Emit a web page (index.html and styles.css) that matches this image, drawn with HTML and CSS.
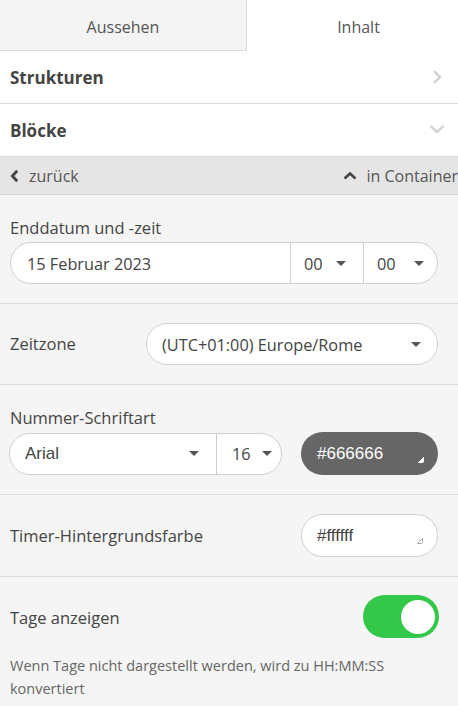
FILE: index.html
```html
<!DOCTYPE html>
<html lang="de">
<head>
<meta charset="utf-8">
<link rel="stylesheet" href="styles.css">
</head>
<body>
<div class="panel">
  <div class="tabs">
    <div class="tab tab-off">Aussehen</div>
    <div class="tab tab-on">Inhalt</div>
  </div>
  <div class="acc-row">
    <span>Strukturen</span>
    <svg class="acc-icon" width="10" height="16" viewBox="0 0 10 16"><path d="M2 2l6 6-6 6" fill="none" stroke="#cfcfcf" stroke-width="2.4"/></svg>
  </div>
  <div class="acc-row">
    <span>Blöcke</span>
    <svg class="acc-icon acc-down" width="16" height="10" viewBox="0 0 16 10"><path d="M1.5 2l6.5 6 6.5-6" fill="none" stroke="#d6d6d6" stroke-width="2.4"/></svg>
  </div>
  <div class="crumb">
    <div class="crumb-item">
      <svg width="9" height="14" viewBox="0 0 9 14"><path d="M7.2 1.8L2.4 7l4.8 5.2" fill="none" stroke="#444" stroke-width="2.8"/></svg>
      <span>zurück</span>
    </div>
    <div class="crumb-item">
      <svg width="14" height="9" viewBox="0 0 14 9"><path d="M1.5 7.5L7 2.5l5.5 5" fill="none" stroke="#444" stroke-width="2.6"/></svg>
      <span>in Container</span>
    </div>
  </div>

  <div class="section">
    <div class="label">Enddatum und -zeit</div>
    <div class="group">
      <div class="seg seg-date">15 Februar 2023</div>
      <div class="seg seg-time"><span>00</span><i class="caret"></i></div>
      <div class="seg seg-time"><span>00</span><i class="caret"></i></div>
    </div>
  </div>

  <div class="section row-section">
    <div class="label">Zeitzone</div>
    <div class="group select-tz">
      <div class="seg seg-fill"><span>(UTC+01:00) Europe/Rome</span><i class="caret"></i></div>
    </div>
  </div>

  <div class="section">
    <div class="label">Nummer-Schriftart</div>
    <div class="font-row">
      <div class="group font-group">
        <div class="seg seg-font"><span class="arial">Arial</span><i class="caret"></i></div>
        <div class="seg seg-size"><span>16</span><i class="caret"></i></div>
      </div>
      <div class="color-pill color-dark">
        <span class="arial">#666666</span>
        <svg class="corner" width="8" height="8" viewBox="0 0 8 8"><path d="M1.5 6.5L6.5 1.5 6.5 5.5Q6.5 6.5 5.5 6.5Z" fill="#fff" stroke="#fff" stroke-width="1" stroke-linejoin="round"/></svg>
      </div>
    </div>
  </div>

  <div class="section row-section">
    <div class="label">Timer-Hintergrundsfarbe</div>
    <div class="color-pill color-light">
      <span class="arial">#ffffff</span>
      <svg class="corner" width="8" height="8" viewBox="0 0 8 8"><path d="M1.5 6.5L6.5 1.5 6.5 5.5Q6.5 6.5 5.5 6.5Z" fill="none" stroke="#aaa" stroke-width="1" stroke-linejoin="round"/></svg>
    </div>
  </div>

  <div class="section last">
    <div class="toggle-row">
      <div class="label">Tage anzeigen</div>
      <div class="toggle"><div class="knob"></div></div>
    </div>
    <p class="help">Wenn Tage nicht dargestellt werden, wird zu HH:MM:SS konvertiert</p>
  </div>
</div>
</body>
</html>
```

FILE: styles.css
```css
* { box-sizing: border-box; }
html, body {
  margin: 0;
  padding: 0;
  background: #f5f5f5;
  overflow: hidden;
}
body {
  font-family: "Open Sans", "Noto Sans", sans-serif;
  color: #444;
  width: 458px;
  height: 706px;
}
.panel {
  width: 458px;
}
.tabs {
  display: grid;
  grid-template-columns: 247px 223px;
  height: 51px;
  width: 470px;
  background: #fff;
}
.tab {
  display: flex;
  align-items: center;
  justify-content: center;
  font-size: 16px;
  color: #555;
  padding-top: 3px;
}
.tab-off {
  background: #f4f4f4;
  border-right: 1px solid #dcdcdc;
  border-bottom: 1px solid #dcdcdc;
}
.tab-on {
  background: #fff;
}
.acc-row {
  height: 53px;
  background: #fff;
  border-bottom: 1px solid #dcdcdc;
  display: flex;
  align-items: center;
  justify-content: space-between;
  padding: 0 16px 0 10px;
  font-weight: 700;
  font-size: 17px;
  color: #444;
}
.acc-row span { padding-top: 1px; }
.acc-down { margin-right: -3px; margin-top: -2px; }
.crumb {
  width: 458px;
  height: 38px;
  background: #e5e5e5;
  border-bottom: 1px solid #d6d6d6;
  display: flex;
  align-items: center;
  justify-content: space-between;
  padding: 0 0 0 10px;
  font-size: 16px;
  color: #555;
}
.crumb-item {
  display: flex;
  align-items: center;
  gap: 10px;
}
.section {
  border-bottom: 1px solid #dcdcdc;
  padding: 22px 20px 19px 10px;
}
.label {
  font-size: 16.5px;
  color: #444;
  line-height: 22px;
}
.section > .label { margin-bottom: 3px; }
.group {
  display: flex;
  height: 42px;
  background: #fff;
  border: 1px solid #cfcfcf;
  border-radius: 21px;
  overflow: hidden;
}
.seg {
  display: flex;
  align-items: center;
  font-size: 16.3px;
  color: #444;
  padding-top: 1px;
}
.seg + .seg { border-left: 1px solid #cfcfcf; }
.seg-date { flex: 1; padding-left: 16px; }
.seg-time { width: 73px; padding-left: 13px; justify-content: space-between; padding-right: 17px; }
.seg-time:last-child { width: 74px; padding-right: 13px; }
.seg-fill { flex: 1; padding: 1px 16px 0 15px; justify-content: space-between; }
.caret {
  width: 0;
  height: 0;
  border-left: 5px solid transparent;
  border-right: 5px solid transparent;
  border-top: 5px solid #555;
  margin-top: -1px;
}
.row-section {
  display: flex;
  align-items: center;
  justify-content: space-between;
  padding-top: 19px;
  padding-bottom: 19px;
}
.row-section > .label { padding-top: 3px; }
.select-tz { width: 292px; }
.font-row {
  display: flex;
  align-items: center;
  justify-content: space-between;
  margin-left: -1px;
}
.font-group { width: 273px; }
.seg-font { width: 206px; padding: 0 17px 0 15px; justify-content: space-between; }
.seg-size { flex: 1; padding: 0 9px 0 15px; justify-content: space-between; }
.arial { font-family: "Liberation Sans", Arial, sans-serif; font-size: 17px; }
.color-pill {
  position: relative;
  width: 137px;
  height: 43px;
  border-radius: 22px;
  display: flex;
  align-items: center;
  padding-left: 16px;
}
.color-dark { background: #666666; color: #fff; }
.color-light { background: #fff; border: 1px solid #cfcfcf; color: #444; padding-left: 15px; }
.corner {
  position: absolute;
  right: 13px;
  bottom: 11px;
}
.last {
  border-bottom: none;
  padding-top: 18px;
  padding-bottom: 0;
}
.toggle-row {
  display: flex;
  align-items: center;
  justify-content: space-between;
}
.toggle-row > .label { padding-top: 3px; }
.toggle {
  width: 76px;
  height: 43px;
  border-radius: 22px;
  background: #34c84a;
  display: flex;
  align-items: center;
  justify-content: flex-end;
  padding-right: 4px;
  margin-right: -1px;
}
.knob {
  width: 34px;
  height: 34px;
  border-radius: 50%;
  background: #fff;
}
.help {
  margin: 16px 0 0;
  font-size: 14.5px;
  line-height: 23px;
  color: #666;
}
```
